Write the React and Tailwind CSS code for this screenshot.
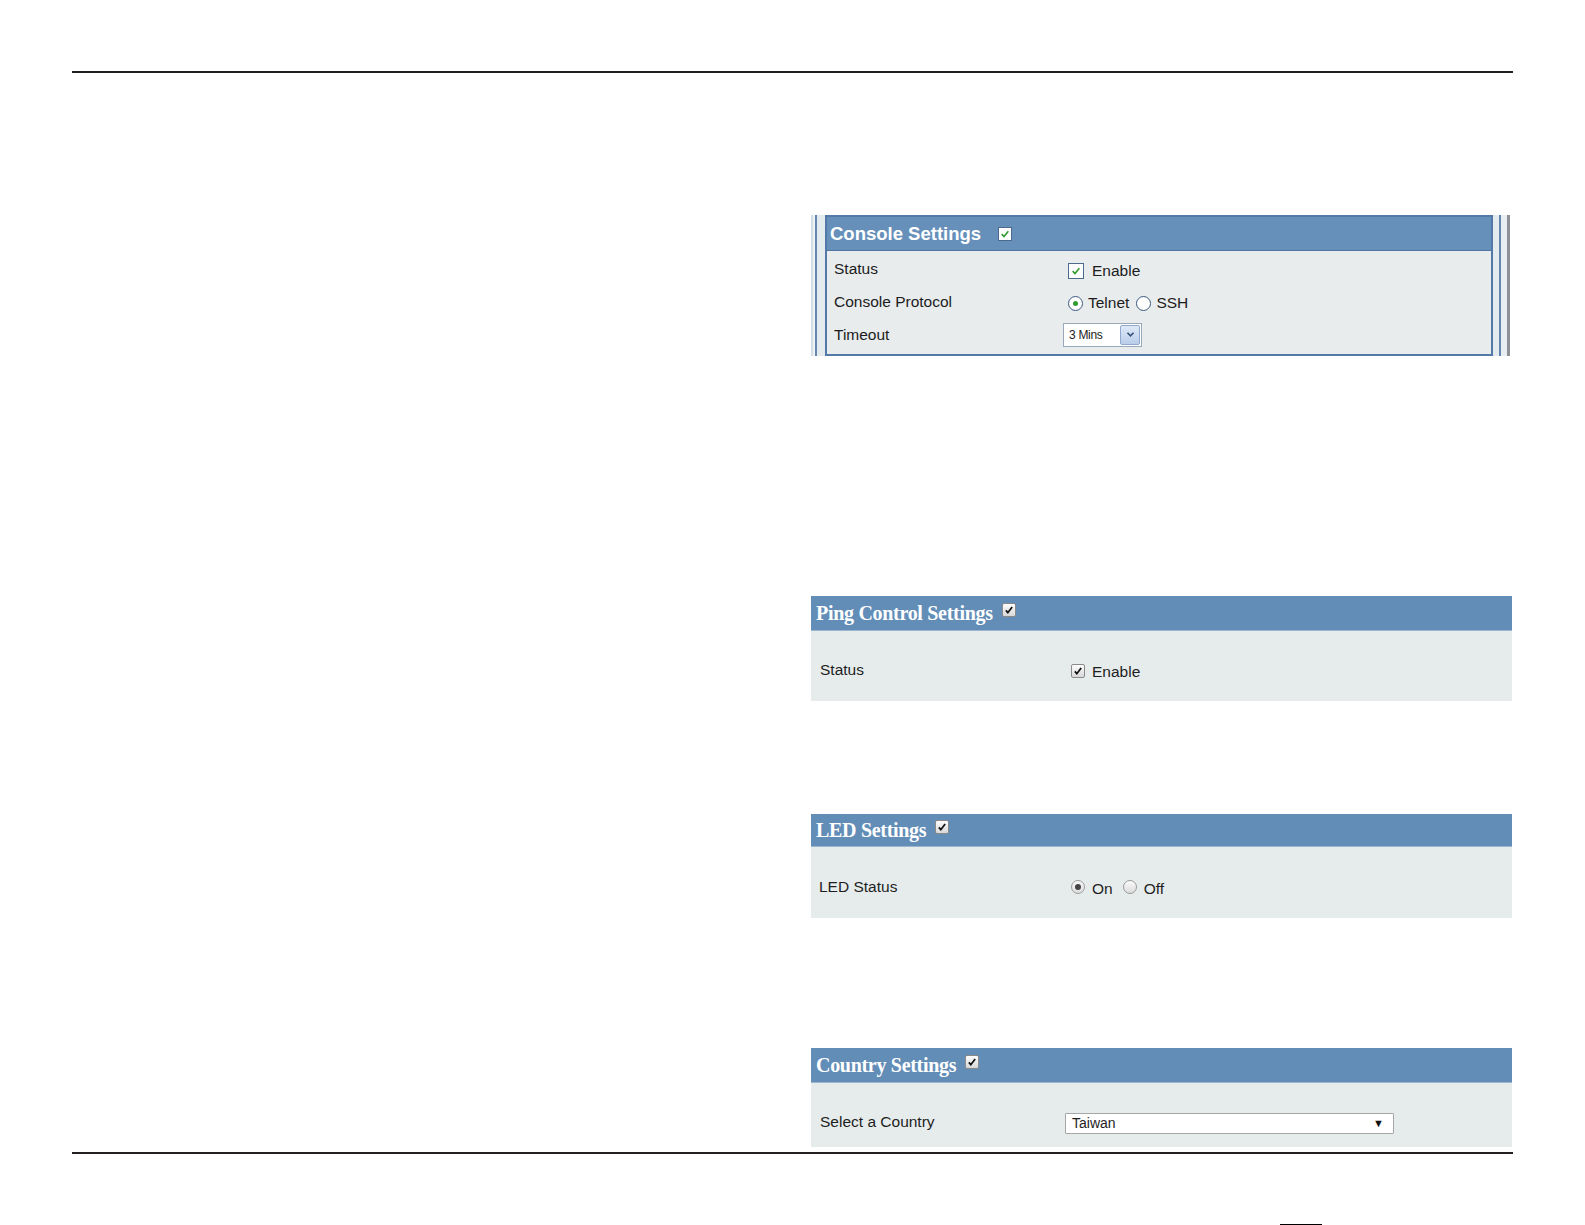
import React from 'react';

const sans = { fontFamily: '"Liberation Sans", Arial, sans-serif' };
const serif = { fontFamily: '"Liberation Serif", "Times New Roman", serif' };

// Old-style checkbox with a green tick (console panel)
function GreenCheck({ size = 14 }) {
    return (
        <span
            className="flex items-center justify-center bg-white border border-[#4b6a8e] shrink-0"
            style={{ width: size, height: size }}
        >
            <svg viewBox="0 0 12 12" className="w-[10px] h-[10px]">
                <path d="M2 6.2 L4.8 9 L10 2.8" fill="none" stroke="#2f9e2f" strokeWidth="2" />
            </svg>
        </span>
    );
}

// Grey checkbox with a black tick
function GreyCheck() {
    return (
        <span className="flex items-center justify-center w-[14px] h-[14px] rounded-[2px] border border-[#8a8a8a] bg-gradient-to-b from-[#fdfdfd] to-[#d8d8d8] shrink-0">
            <svg viewBox="0 0 12 12" className="w-[10px] h-[10px]">
                <path d="M2.2 6.4 L4.6 9.2 L9.8 2.4" fill="none" stroke="#111" strokeWidth="2.1" />
            </svg>
        </span>
    );
}

function GreenRadio({ on }) {
    return (
        <span className="flex items-center justify-center w-[15px] h-[15px] rounded-full border border-[#3b5a80] bg-white shrink-0">
            {on && <span className="w-[5px] h-[5px] rounded-full bg-[#2f9e2f]" />}
        </span>
    );
}

function GreyRadio({ on }) {
    return (
        <span className="flex items-center justify-center w-[14px] h-[14px] rounded-full border border-[#9a9a9a] bg-gradient-to-b from-[#fafafa] to-[#dcdcdc] shrink-0">
            {on && <span className="w-[6px] h-[6px] rounded-full bg-[#444]" />}
        </span>
    );
}

function Panel({ title, headerClass, bodyClass, children }) {
    return (
        <div className="w-[701px]">
            <div className={`flex items-center bg-[#628db7] border-b border-[#9db6cf] pl-[5px] ${headerClass}`}>
                <span className="text-white font-bold text-[20px] tracking-[-0.3px]" style={serif}>{title}</span>
                <span className="flex ml-[9px] -mt-[6px]"><GreyCheck /></span>
            </div>
            <div className={`bg-[#e6ecec] ${bodyClass}`}>{children}</div>
        </div>
    );
}

export default function App() {
    return (
        <div className="w-[1585px] h-[1225px] bg-white flex flex-col pt-[71px] relative" style={sans}>
            <div className="mx-[72px] h-[2px] bg-[#231f20]" />

            <div className="flex">
                <div className="w-[811px] shrink-0" />
                <div className="w-[701px] flex flex-col">
                    {/* Console settings, captured with its surrounding frame */}
                    <div className="mt-[142px] flex h-[141px] w-[699px]">
                        <div className="w-[2px] bg-[#d3dee6]" />
                        <div className="w-[2px] bg-[#eef2f4]" />
                        <div className="w-[2px] bg-[#6586b1]" />
                        <div className="w-[8px] bg-[#e4ebef]" />
                        <div className="w-[668px] border-2 border-[#5379a8] flex flex-col">
                            <div className="h-[34px] bg-[#6690ba] border-b border-[#4f76a3] flex items-center pl-[3px]">
                                <span className="text-white font-bold text-[18.5px]">Console Settings</span>
                                <span className="flex ml-[17px]"><GreenCheck size={14} /></span>
                            </div>
                            <div className="flex-1 bg-[#e8eced] pt-[1px] text-[15.5px] text-[#1c1c1c]">
                                <div className="h-[33px] flex items-center">
                                    <span className="w-[241px] pl-[7px]">Status</span>
                                    <span className="flex items-center gap-[8px] mt-[5px]">
                                        <GreenCheck size={16} />
                                        <span>Enable</span>
                                    </span>
                                </div>
                                <div className="h-[33px] flex items-center">
                                    <span className="w-[241px] pl-[7px]">Console Protocol</span>
                                    <span className="flex items-center mt-[3px]">
                                        <GreenRadio on />
                                        <span className="ml-[5px]">Telnet</span>
                                        <span className="flex ml-[7px]"><GreenRadio /></span>
                                        <span className="ml-[5px]">SSH</span>
                                    </span>
                                </div>
                                <div className="h-[33px] flex items-center">
                                    <span className="w-[236px] pl-[7px]">Timeout</span>
                                    <span className="flex items-stretch h-[24px] w-[79px] border border-[#9aa9ba] bg-white">
                                        <span className="flex-1 flex items-center pl-[5px] text-[12px] tracking-[-0.3px]">3 Mins</span>
                                        <span className="w-[20px] m-[1px] flex items-center justify-center bg-gradient-to-b from-[#dfe9f7] to-[#b9cdea] border border-[#8fa9cf] rounded-[2px]">
                                            <svg viewBox="0 0 10 8" className="w-[9px] h-[7px]">
                                                <path d="M1.5 2 L5 5.5 L8.5 2" fill="none" stroke="#35557f" strokeWidth="2" />
                                            </svg>
                                        </span>
                                    </span>
                                </div>
                            </div>
                        </div>
                        <div className="w-[6px] bg-[#e4ebef]" />
                        <div className="w-[2px] bg-[#6586b1]" />
                        <div className="w-[6px] bg-[#e8eef1]" />
                        <div className="w-[3px] bg-[#8d9196]" />
                    </div>

                    {/* Ping control */}
                    <div className="mt-[240px]">
                        <Panel title="Ping Control Settings" headerClass="h-[35px]" bodyClass="h-[70px]">
                            <div className="h-full flex items-center pt-[8px] text-[15.5px] text-[#1e1e1e]">
                                <span className="w-[260px] pl-[9px]">Status</span>
                                <span className="flex items-center gap-[7px] mt-[4px]">
                                    <span className="flex -mt-[3px]"><GreyCheck /></span>
                                    <span>Enable</span>
                                </span>
                            </div>
                        </Panel>
                    </div>

                    {/* LED */}
                    <div className="mt-[113px]">
                        <Panel title="LED Settings" headerClass="h-[33px]" bodyClass="h-[71px]">
                            <div className="h-full flex items-center pt-[8px] text-[15.5px] text-[#1e1e1e]">
                                <span className="w-[260px] pl-[8px]">LED Status</span>
                                <span className="flex items-center mt-[4px]">
                                    <span className="flex -mt-[3px]"><GreyRadio on /></span>
                                    <span className="ml-[7px]">On</span>
                                    <span className="flex ml-[10px] -mt-[3px]"><GreyRadio /></span>
                                    <span className="ml-[7px]">Off</span>
                                </span>
                            </div>
                        </Panel>
                    </div>

                    {/* Country */}
                    <div className="mt-[130px]">
                        <Panel title="Country Settings" headerClass="h-[35px]" bodyClass="h-[64px]">
                            <div className="h-full flex items-center pt-[14px] text-[15.5px] text-[#1e1e1e]">
                                <span className="w-[254px] pl-[9px]">Select a Country</span>
                                <span className="flex items-center justify-between w-[329px] h-[21px] mt-[3px] bg-white border border-[#a6a6a6] rounded-[1px] pl-[6px] pr-[9px]">
                                    <span className="text-[14px]">Taiwan</span>
                                    <span className="text-[11px] text-[#111]">▼</span>
                                </span>
                            </div>
                        </Panel>
                    </div>
                </div>
            </div>

            <div className="mx-[72px] mt-[5px] h-[2px] bg-[#231f20]" />

            {/* scan residue along the page edge */}
            <div className="absolute left-[1280px] bottom-0 w-[42px] h-[1px] bg-black" />
        </div>
    );
}
